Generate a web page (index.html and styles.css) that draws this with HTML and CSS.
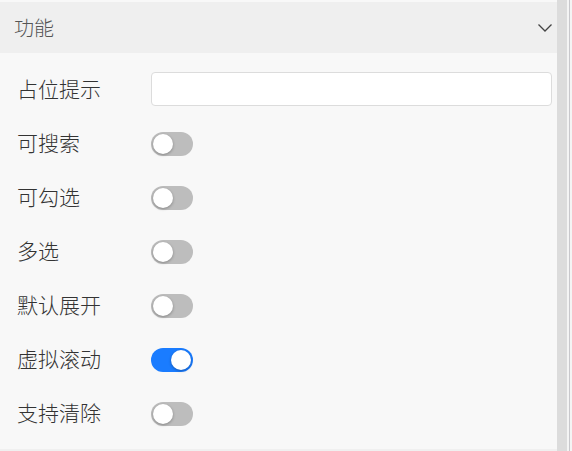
FILE: index.html
```html
<!DOCTYPE html>
<html lang="zh">
<head>
<meta charset="utf-8">
<link rel="stylesheet" href="styles.css">
</head>
<body>
<div class="frame">
  <div class="panel">
    <div class="header">
      <span class="title">功能</span>
      <svg class="chev" width="16" height="10" viewBox="0 0 16 10"><path d="M1.5 1.5 L8 8 L14.5 1.5" fill="none" stroke="#444" stroke-width="1.3"/></svg>
    </div>
    <div class="body">
      <div class="row">
        <span class="label">占位提示</span>
        <div class="input"></div>
      </div>
      <div class="row">
        <span class="label">可搜索</span>
        <span class="switch"><span class="knob"></span></span>
      </div>
      <div class="row">
        <span class="label">可勾选</span>
        <span class="switch"><span class="knob"></span></span>
      </div>
      <div class="row">
        <span class="label">多选</span>
        <span class="switch"><span class="knob"></span></span>
      </div>
      <div class="row">
        <span class="label">默认展开</span>
        <span class="switch"><span class="knob"></span></span>
      </div>
      <div class="row">
        <span class="label">虚拟滚动</span>
        <span class="switch on"><span class="knob"></span></span>
      </div>
      <div class="row">
        <span class="label">支持清除</span>
        <span class="switch"><span class="knob"></span></span>
      </div>
    </div>
  </div>
  <div class="track"></div>
  <div class="gap"></div>
  <div class="line"></div>
  <div class="rest"></div>
</div>
</body>
</html>
```
FILE: styles.css
```css
html, body {
  margin: 0;
  padding: 0;
  background: #f8f8f8;
}
body {
  font-family: "Noto Sans CJK SC", "Noto Sans", sans-serif;
}
.frame {
  display: flex;
  width: 572px;
  height: 451px;
  overflow: hidden;
}
.panel {
  width: 557px;
  padding-top: 2px;
  box-sizing: border-box;
  display: flex;
  flex-direction: column;
  border-bottom: 2px solid #f0f0f0;
}
.header {
  height: 51px;
  background: #efefef;
  display: flex;
  align-items: center;
  justify-content: space-between;
  padding: 0 4px 0 14px;
}
.title {
  font-size: 20px;
  font-weight: 300;
  color: #555;
}
.chev {
  margin-top: 0;
}
.body {
  flex: 1;
  padding: 9px 5px 0 17px;
  display: flex;
  flex-direction: column;
}
.row {
  display: flex;
  align-items: center;
  height: 54px;
}
.label {
  width: 134px;
  font-size: 21px;
  font-weight: 300;
  color: #333;
  margin-top: -3px;
}
.input {
  flex: 1;
  height: 32px;
  background: #fff;
  border: 1px solid #dcdcdc;
  border-radius: 4px;
}
.switch {
  position: relative;
  width: 42px;
  height: 24px;
  border-radius: 12px;
  background: #bdbdbd;
  margin-top: 2px;
}
.switch .knob {
  position: absolute;
  top: 2px;
  left: 2px;
  width: 20px;
  height: 20px;
  border-radius: 50%;
  background: #fff;
  box-shadow: 0 1px 3px rgba(0,0,0,0.3);
}
.switch.on {
  background: #1a7cff;
}
.switch.on .knob {
  left: 20px;
}
.track {
  width: 10px;
  background: #dcdcdc;
}
.gap {
  width: 2px;
  background: #f4f4f4;
}
.line {
  width: 1px;
  background: #c8c8cc;
}
.rest {
  flex: 1;
  background: #f4f4f4;
}
```
